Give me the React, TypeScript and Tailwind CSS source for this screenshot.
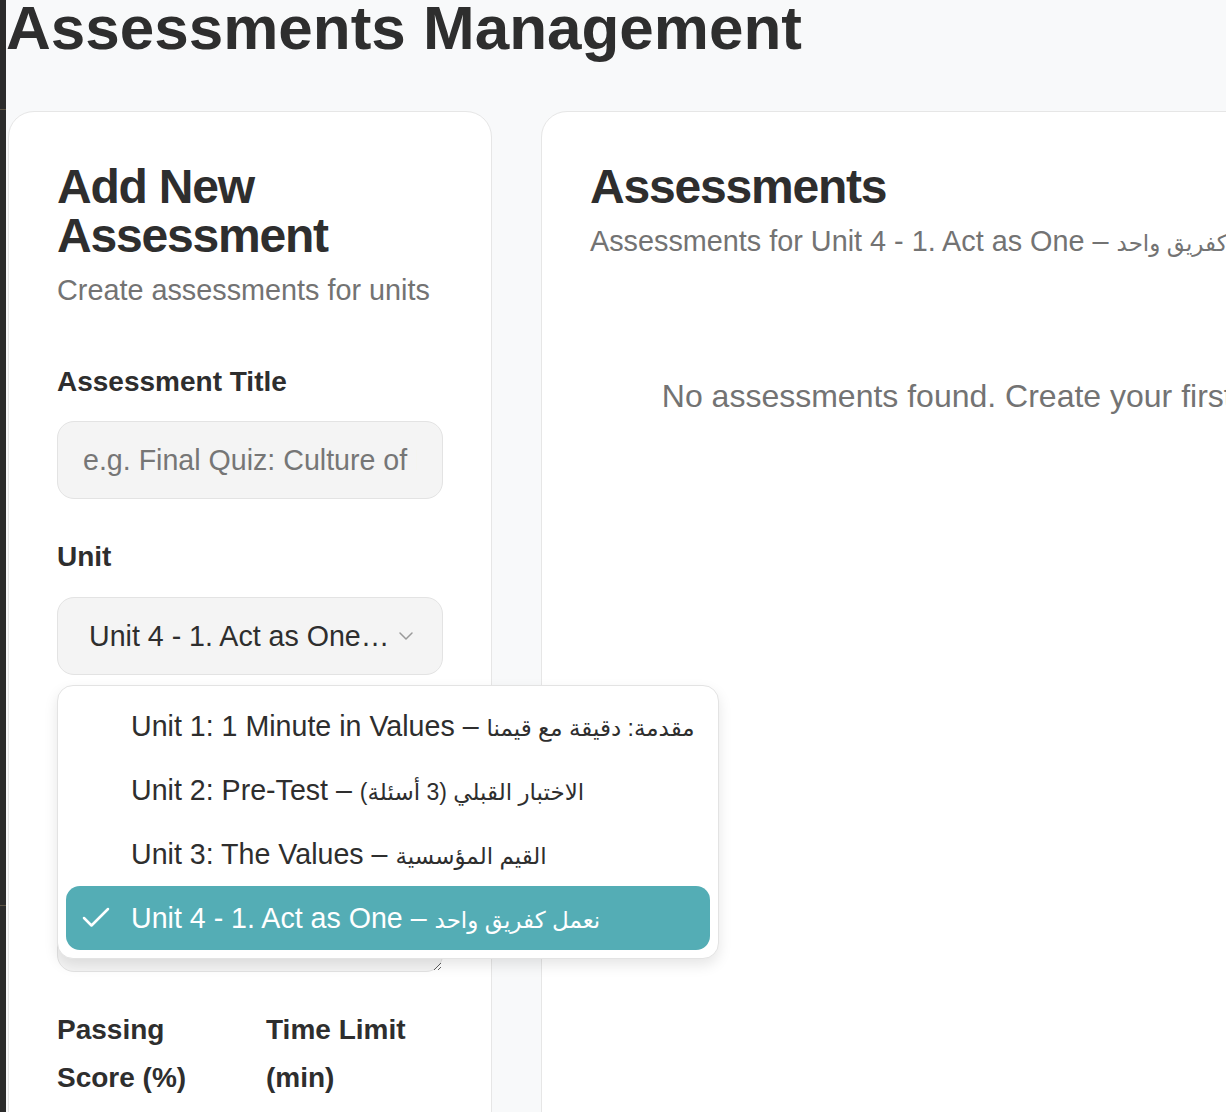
import React from "react";
import { Check, ChevronDown } from "lucide-react";

const units: [string, string][] = [
  ["Unit 1: 1 Minute in Values – ", "مقدمة: دقيقة مع قيمنا"],
  ["Unit 2: Pre-Test – ", "الاختبار القبلي (3 أسئلة)"],
  ["Unit 3: The Values – ", "القيم المؤسسية"],
  ["Unit 4 - 1. Act as One – ", "نعمل كفريق واحد"],
];

function Ar({ children }: { children: React.ReactNode }) {
  return <span className="text-[23px]">{children}</span>;
}

function Label({ children }: { children: React.ReactNode }) {
  return (
    <label className="block text-[28px] leading-[48px] font-semibold text-[#2e2e2e]">
      {children}
    </label>
  );
}

export default function App() {
  const selected = 3;
  return (
    <div className="flex min-h-screen w-full overflow-hidden bg-[#f8f9fa] font-['Liberation_Sans','DejaVu_Sans',sans-serif] text-[#2e2e2e]">
      <div className="flex w-[6px] shrink-0 flex-col bg-[#2b2b2b]">
        <div className="h-[109px]" />
        <div className="h-px bg-[#5c5444]" />
        <div className="h-[795px]" />
        <div className="h-px bg-[#5c5444]" />
      </div>

      <main className="min-w-0 flex-1 pl-[2px]">
        <h1 className="-ml-[2px] whitespace-nowrap text-[62px] font-bold leading-[56px] text-[#2e2e2e]">
          Assessments Management
        </h1>

        <div className="mt-[55px] flex items-start gap-[49px]">
          {/* Left card */}
          <section className="w-[484px] shrink-0 rounded-[26px] border border-[#e6e6e6] bg-white px-[48px] pb-[48px] pt-[50px]">
            <h2 className="text-[48px] font-bold leading-[49px] tracking-tight text-[#2e2e2e]">
              Add New Assessment
            </h2>
            <p className="mt-[9px] text-[28.8px] leading-[42px] text-[#737373]">
              Create assessments for units
            </p>

            <div className="mt-[47px] flex flex-col gap-[34px]">
              <div className="flex flex-col gap-[15px]">
                <Label>Assessment Title</Label>
                <input
                  className="h-[78px] w-full rounded-[17px] border border-[#e3e3e3] bg-[#f4f4f4] px-[25px] text-[28.6px] text-[#2e2e2e] outline-none placeholder:text-[#767676]"
                  placeholder="e.g. Final Quiz: Culture of Excellence"
                />
              </div>

              <div className="flex flex-col gap-[16px]">
                <Label>Unit</Label>
                <div className="relative">
                  <button className="flex h-[78px] w-full items-center rounded-[17px] border border-[#e3e3e3] bg-[#f4f4f4] pl-[31px] pr-[24px] text-left text-[28.6px] text-[#2e2e2e]">
                    <span className="max-w-[306px] truncate">
                      {units[selected][0]}
                      {units[selected][1]}
                    </span>
                    <ChevronDown
                      size={24}
                      strokeWidth={1.5}
                      className="ml-auto shrink-0 text-[#9a9a9a]"
                    />
                  </button>

                  <div className="absolute left-0 top-[88px] z-10 w-max min-w-full rounded-[16px] border border-[#e3e3e3] bg-white p-[8px] shadow-[0_6px_14px_rgba(0,0,0,0.10)]">
                    {units.map((u, i) => (
                      <div
                        key={u[0]}
                        className={
                          i === selected
                            ? "relative flex h-[64px] items-center whitespace-nowrap rounded-[14px] bg-[#54adb5] pl-[65px] pr-[15px] text-[28.6px] text-white"
                            : "relative flex h-[64px] items-center whitespace-nowrap rounded-[14px] pl-[65px] pr-[15px] text-[28.6px] text-[#2e2e2e]"
                        }
                      >
                        {i === selected && (
                          <Check
                            size={36}
                            strokeWidth={1.7}
                            className="absolute left-[12px] top-1/2 -translate-y-1/2 text-white"
                          />
                        )}
                        <span className="whitespace-pre">
                          {u[0]}
                          <Ar>{u[1]}</Ar>
                        </span>
                      </div>
                    ))}
                  </div>
                </div>
              </div>

              <div className="flex flex-col gap-[15px]">
                <Label>Description</Label>
                <textarea
                  className="h-[200px] w-full rounded-[17px] border border-[#e3e3e3] bg-[#f4f4f4] px-[25px] py-[16px] text-[28.6px] outline-none placeholder:text-[#767676]"
                  placeholder="Brief description of the assessment"
                />
              </div>

              <div className="grid grid-cols-2 gap-x-[32px]">
                <div className="flex flex-col gap-[15px]">
                  <Label>Passing Score (%)</Label>
                  <input
                    className="h-[78px] w-full rounded-[17px] border border-[#e3e3e3] bg-[#f4f4f4] px-[25px] text-[28.6px] outline-none"
                    defaultValue="70"
                  />
                </div>
                <div className="flex flex-col gap-[15px]">
                  <Label>Time Limit (min)</Label>
                  <input
                    className="h-[78px] w-full rounded-[17px] border border-[#e3e3e3] bg-[#f4f4f4] px-[25px] text-[28.6px] outline-none"
                    defaultValue="30"
                  />
                </div>
              </div>
            </div>
          </section>

          {/* Right card */}
          <section className="min-h-[1100px] w-[1001px] shrink-0 rounded-[26px] border border-[#e6e6e6] bg-white px-[48px] pb-[48px] pt-[50px]">
            <h2 className="text-[48px] font-bold leading-[49px] tracking-tight text-[#2e2e2e]">
              Assessments
            </h2>
            <p className="mt-[9px] whitespace-pre text-[28.8px] leading-[42px] text-[#737373]">
              Assessments for Unit 4 - 1. Act as One – <Ar>نعمل كفريق واحد</Ar>
            </p>
            <p className="mt-[108px] whitespace-nowrap text-center text-[32px] leading-[48px] text-[#737373]">
              No assessments found. Create your first assessment.
            </p>
          </section>
        </div>
      </main>
    </div>
  );
}
